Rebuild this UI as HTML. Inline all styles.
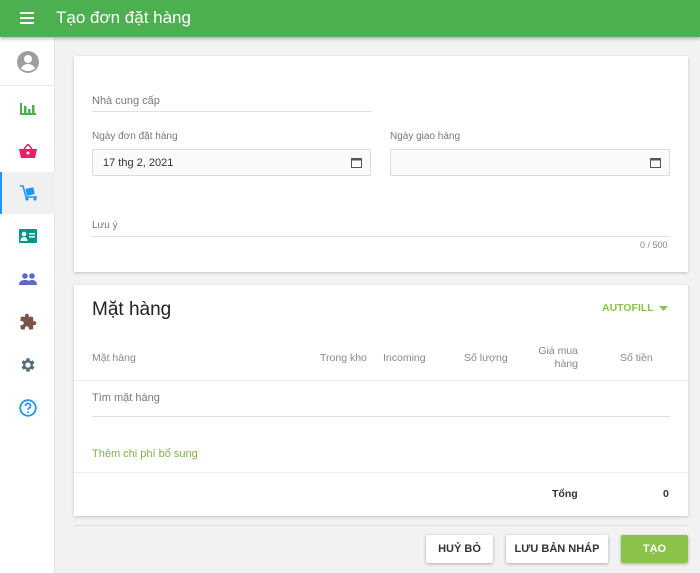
<!DOCTYPE html>
<html><head><meta charset="utf-8"><style>
*{box-sizing:border-box;margin:0;padding:0}
body{width:700px;height:573px;overflow:hidden;background:#f2f2f2;font-family:"Liberation Sans",Roboto,sans-serif;position:relative}
.hdr{position:absolute;left:0;top:0;width:700px;height:37px;background:#4caf50;box-shadow:0 2px 3px rgba(0,0,0,.25);z-index:2}
.hdr .t{position:absolute;left:56px;top:8px;color:#fff;font-size:17px}
.side{position:absolute;left:0;top:37px;width:55px;height:536px;background:#fff;border-right:1px solid #e4e4e4}
.ic{position:absolute;left:0;width:55px;height:42px;display:flex;align-items:center;justify-content:center}
.card{position:absolute;left:74px;width:614px;background:#fff;box-shadow:0 1px 3px rgba(0,0,0,.2)}
.lbl{position:absolute;font-size:10px;color:#777}
.line{position:absolute;height:1px;background:#e0e0e0}
.inp{position:absolute;height:27px;border:1px solid #ddd;background:#fafafa;border-radius:2px;font-size:11px;color:#333;padding:7px 10px}
.th{position:absolute;font-size:10.5px;color:#888}
.btn{position:absolute;top:535px;height:28px;background:#fff;box-shadow:0 1px 3px rgba(0,0,0,.3);font-size:11px;font-weight:bold;color:#333;display:flex;align-items:center;justify-content:center;border-radius:2px}
</style></head><body>
<div class="hdr">
<svg style="position:absolute;left:20px;top:12px" width="14" height="12"><rect y="0" width="14" height="2" fill="#fff"/><rect y="5" width="14" height="2" fill="#fff"/><rect y="10" width="14" height="2" fill="#fff"/></svg>
<div class="t">Tạo đơn đặt hàng</div></div>
<div class="side">
<div class="ic" style="top:4px"><svg width="24" height="24" viewBox="0 0 24 24"><circle cx="12" cy="12" r="11" fill="#9e9e9e"/><circle cx="12" cy="9" r="4" fill="#fff"/><path d="M5 18c2-3 5-4 7-4s5 1 7 4c-2 2-4 3-7 3s-5-1-7-3z" fill="#fff"/></svg></div>
<div class="line" style="left:0;top:48px;width:55px;background:#e8e8e8"></div>
<div class="ic" style="top:50px"><svg width="16" height="14"><rect x="0" y="2" width="2" height="12" fill="#4caf50"/><rect x="4" y="5" width="2.5" height="9" fill="#4caf50"/><rect x="8" y="8" width="2.5" height="6" fill="#4caf50"/><rect x="12" y="4" width="2.5" height="10" fill="#4caf50"/><rect x="0" y="12" width="16" height="2" fill="#4caf50"/></svg></div>
<div class="ic" style="top:93px"><svg width="18" height="14" viewBox="0 0 18 14"><path d="M5 5L9 0l4 5" stroke="#e91e63" stroke-width="1.5" fill="none"/><path d="M0 5h18l-2 9H2z" fill="#e91e63"/><circle cx="9" cy="9" r="1.5" fill="#fff"/></svg></div>
<div class="ic" style="top:135px;background:#f0f0f0;border-left:2px solid #2196f3"><svg width="18" height="16" viewBox="0 0 18 16"><path d="M0 1h3l3 11h11" stroke="#2196f3" stroke-width="1.6" fill="none"/><rect x="6" y="3" width="8" height="7" fill="#2196f3" transform="rotate(-12 10 6)"/><circle cx="7" cy="14" r="1.6" fill="#2196f3"/><circle cx="15" cy="14" r="1.6" fill="#2196f3"/></svg></div>
<div class="ic" style="top:178px"><svg width="18" height="14"><rect width="18" height="14" rx="1" fill="#009688"/><circle cx="5" cy="5" r="2.3" fill="#fff"/><path d="M1.5 12c0-3 2-4 3.5-4s3.5 1 3.5 4z" fill="#fff"/><rect x="10" y="4" width="6" height="1.5" fill="#fff"/><rect x="10" y="7" width="6" height="1.5" fill="#fff"/></svg></div>
<div class="ic" style="top:221px"><svg width="18" height="12"><circle cx="6" cy="3" r="2.8" fill="#5c6bc0"/><circle cx="13" cy="3" r="2.8" fill="#5c6bc0"/><path d="M0 12c0-4 3-5 6-5s6 1 6 5z" fill="#5c6bc0"/><path d="M8 12c0-4 3-5 5-5s5 1 5 5z" fill="#5c6bc0"/></svg></div>
<div class="ic" style="top:264px"><svg width="18" height="18" viewBox="0 0 24 24"><path d="M20.5 11H19V7a2 2 0 0 0-2-2h-4V3.5a2.5 2.5 0 0 0-5 0V5H4a2 2 0 0 0-2 2v3.8h1.5a2.7 2.7 0 0 1 0 5.4H2V20a2 2 0 0 0 2 2h3.8v-1.5a2.7 2.7 0 0 1 5.4 0V22H17a2 2 0 0 0 2-2v-4h1.5a2.5 2.5 0 0 0 0-5z" fill="#795548"/></svg></div>
<div class="ic" style="top:307px"><svg width="18" height="18" viewBox="0 0 24 24"><path d="M19.4 13a7.5 7.5 0 0 0 0-2l2.1-1.6-2-3.5-2.5 1a7 7 0 0 0-1.7-1L15 3h-4l-.4 2.7a7 7 0 0 0-1.7 1l-2.5-1-2 3.5L6.6 11a7.5 7.5 0 0 0 0 2l-2.2 1.6 2 3.5 2.5-1a7 7 0 0 0 1.7 1L11 21h4l.4-2.7a7 7 0 0 0 1.7-1l2.5 1 2-3.5zM13 15.5a3.5 3.5 0 1 1 0-7 3.5 3.5 0 0 1 0 7z" fill="#546e7a" transform="translate(-1 0)"/></svg></div>
<div class="ic" style="top:350px"><svg width="18" height="18" viewBox="0 0 18 18"><circle cx="9" cy="9" r="7.8" stroke="#2196f3" stroke-width="1.8" fill="none"/><path d="M6.5 7a2.5 2.5 0 1 1 3.5 2.2c-.8.4-1 .9-1 1.6" stroke="#2196f3" stroke-width="1.8" fill="none"/><circle cx="9" cy="13.3" r="1" fill="#2196f3"/></svg></div>
</div>

<div class="card" style="top:56px;height:216px">
<div class="lbl" style="left:18px;top:39px;font-size:11px">Nhà cung cấp</div>
<div class="line" style="left:18px;top:55px;width:280px"></div>
<div class="lbl" style="left:18px;top:75px">Ngày đơn đặt hàng</div>
<div class="inp" style="left:18px;top:93px;width:279px">17 thg 2, 2021</div>
<svg style="position:absolute;left:277px;top:101px" width="11" height="11"><rect x=".5" y="1.5" width="10" height="9" stroke="#555" fill="none"/><rect x=".5" y="1.5" width="10" height="2" fill="#555"/></svg>
<div class="lbl" style="left:316px;top:75px">Ngày giao hàng</div>
<div class="inp" style="left:316px;top:93px;width:280px"></div>
<svg style="position:absolute;left:576px;top:101px" width="11" height="11"><rect x=".5" y="1.5" width="10" height="9" stroke="#555" fill="none"/><rect x=".5" y="1.5" width="10" height="2" fill="#555"/></svg>
<div class="lbl" style="left:18px;top:164px">Lưu ý</div>
<div class="line" style="left:18px;top:180px;width:578px"></div>
<div class="lbl" style="left:566px;top:184px;font-size:9px;color:#888">0 / 500</div>
</div>

<div class="card" style="top:285px;height:231px">
<div style="position:absolute;left:18px;top:14px;font-size:19px;color:#222">Mặt hàng</div>
<div style="position:absolute;left:528px;top:17px;font-size:10.5px;font-weight:bold;color:#8bc34a">AUTOFILL</div>
<svg style="position:absolute;left:585px;top:21px" width="9" height="5"><path d="M0 0h9L4.5 5z" fill="#8bc34a"/></svg>
<div class="th" style="left:18px;top:67px">Mặt hàng</div>
<div class="th" style="left:246px;top:67px">Trong kho</div>
<div class="th" style="left:309px;top:67px">Incoming</div>
<div class="th" style="left:390px;top:67px">Số lượng</div>
<div class="th" style="left:458px;top:60px;text-align:right;width:46px;line-height:13px">Giá mua hàng</div>
<div class="th" style="left:546px;top:67px">Số tiền</div>
<div class="line" style="left:0;top:95px;width:614px;background:#eee"></div>
<div class="lbl" style="left:18px;top:107px;font-size:11px">Tìm mặt hàng</div>
<div class="line" style="left:18px;top:131px;width:578px"></div>
<div style="position:absolute;left:18px;top:163px;font-size:11px;color:#7cb342">Thêm chi phí bổ sung</div>
<div class="line" style="left:0;top:187px;width:614px;background:#eee"></div>
<div style="position:absolute;left:478px;top:203px;font-size:10.5px;font-weight:bold;color:#333">Tổng</div>
<div style="position:absolute;left:589px;top:203px;font-size:10.5px;font-weight:bold;color:#333">0</div>
</div>
<div class="line" style="left:74px;top:525px;width:614px;background:#ddd"></div>
<div class="btn" style="left:426px;width:67px">HUỶ BỎ</div>
<div class="btn" style="left:506px;width:102px">LƯU BẢN NHÁP</div>
<div class="btn" style="left:621px;width:67px;background:#8bc34a;color:#fff">TẠO</div>
</body></html>
